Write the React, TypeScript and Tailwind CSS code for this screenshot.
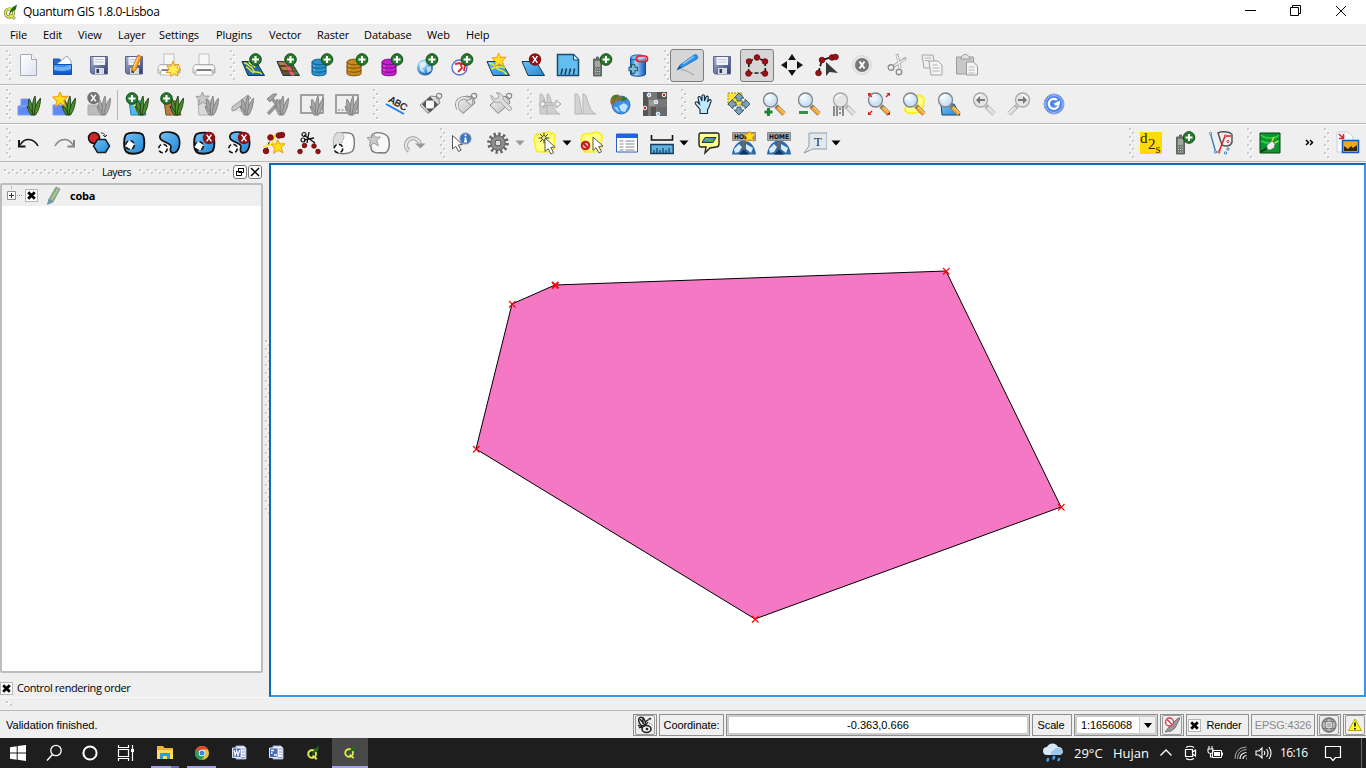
import React from "react";

type Kids = { children?: React.ReactNode };

function Svg({ children, w = 24, h = 24, vb }: Kids & { w?: number; h?: number; vb?: string }) {
  return (
    <svg width={w} height={h} viewBox={vb ?? `0 0 ${w} ${h}`} fill="none" className="block shrink-0">
      {children}
    </svg>
  );
}

function Defs() {
  return (
    <svg width="0" height="0" className="absolute">
      <defs>
        <linearGradient id="blue" x1="0" y1="0" x2="1" y2="1"><stop offset="0" stopColor="#6fc3f7" /><stop offset="1" stopColor="#2186d8" /></linearGradient>
        <linearGradient id="paper" x1="0" y1="0" x2="1" y2="1"><stop offset="0" stopColor="#fff" /><stop offset="1" stopColor="#dfe3f0" /></linearGradient>
        <linearGradient id="disk" x1="0" y1="0" x2="1" y2="1"><stop offset="0" stopColor="#a9b3cf" /><stop offset="0.5" stopColor="#6f7ba6" /><stop offset="1" stopColor="#2c3866" /></linearGradient>
        <linearGradient id="folder" x1="0" y1="0" x2="0" y2="1"><stop offset="0" stopColor="#3f9bf0" /><stop offset="1" stopColor="#0a4fbe" /></linearGradient>
        <linearGradient id="gray" x1="0" y1="0" x2="1" y2="1"><stop offset="0" stopColor="#f4f4f4" /><stop offset="1" stopColor="#bdbdbd" /></linearGradient>
        <linearGradient id="tank" x1="0" y1="0" x2="1" y2="0"><stop offset="0" stopColor="#1b63c0" /><stop offset="0.35" stopColor="#a5d6fb" /><stop offset="1" stopColor="#0f55b5" /></linearGradient>
        <radialGradient id="lens" cx="0.4" cy="0.35" r="0.7"><stop offset="0" stopColor="#f4faff" /><stop offset="1" stopColor="#bcd6f0" /></radialGradient>
        <radialGradient id="globe" cx="0.35" cy="0.3" r="0.8"><stop offset="0" stopColor="#e6f5ff" /><stop offset="0.5" stopColor="#5aa9e6" /><stop offset="1" stopColor="#164f94" /></radialGradient>
        <pattern id="gripV" width="6" height="8" patternUnits="userSpaceOnUse">
          <path d="M1 1h2v2h-2zM4 5h2v2h-2z" fill="#fff" /><path d="M0 0h2v2h-2zM3 4h2v2h-2z" fill="#c9c9c9" />
        </pattern>
        <pattern id="gripH" width="8" height="6" patternUnits="userSpaceOnUse">
          <path d="M1 1h2v2h-2zM5 4h2v2h-2z" fill="#fff" /><path d="M0 0h2v2h-2zM4 3h2v2h-2z" fill="#c9c9c9" />
        </pattern>
      </defs>
    </svg>
  );
}

/* ---------- shared glyph parts ---------- */
const Plus = ({ x = 16, y = 6.5 }: { x?: number; y?: number }) => (
  <g>
    <circle cx={x} cy={y} r="5.8" fill="#267a2b" stroke="#0f4a17" strokeWidth="1" />
    <path d={`M${x - 3.5} ${y}h7M${x} ${y - 3.5}v7`} stroke="#fff" strokeWidth="2.1" />
  </g>
);
const Cross = ({ x = 16, y = 7, c = "#8c1014" }: { x?: number; y?: number; c?: string }) => (
  <g>
    <circle cx={x} cy={y} r="6.2" fill={c} />
    <path d={`M${x - 2.4} ${y - 3.4}l4.8 6.8M${x + 2.4} ${y - 3.4}l-4.8 6.8`} stroke="#fff" strokeWidth="1.5" />
  </g>
);
const Star = ({ x = 0, y = 0, s = 1, gray = false }: { x?: number; y?: number; s?: number; gray?: boolean }) => (
  <path
    transform={`translate(${x} ${y}) scale(${s})`}
    d="M6.6 0L8.7 4.4L14 4.2L10.3 8.2L12 13.4L7.2 10.8L2.6 13.8L3.6 8.6L0 4.8L5 4.4Z"
    fill={gray ? "#c9c9c9" : "#ffe01c"}
    stroke={gray ? "#9a9a9a" : "#f39a10"}
    strokeWidth="1"
  />
);
const Grass = ({ gray = false }: { gray?: boolean }) => (
  <g stroke={gray ? "#808080" : "#1f3f16"} fill={gray ? "#a8a8a8" : "#4c8f2c"} strokeWidth="0.9">
    <path d="M16 23C12 19 10.500 13 12 7C15 11 16.500 17 16.500 23Z" />
    <path d="M16 23C14.500 16 15.500 9 18 4C19.500 11 18.500 18 17.500 23Z" />
    <path d="M17 23C17.500 16 20 10 23.500 6C23.500 13 21.500 19 18.500 23Z" />
    <path d="M14 23C12.500 20 11 18 10 14C13 16 15 19 16 23Z" />
  </g>
);
const Sheet = ({ kind = "blue" }: { kind?: "blue" | "vector" | "raster" }) => (
  <g>
    <path d="M1 8.500H15L23.500 22.500H7Z" fill={kind === "raster" ? "#63512b" : kind === "vector" ? "#1c6aa8" : "url(#blue)"} stroke="#17384b" strokeWidth="1" />
    {kind === "vector" && <path d="M3 10c4 0 4 3 7 4s1 5 5 5 4 1 6 2M8 8.500c0 4 5 2 6 6M5 14c3 0 4 5 8 6" stroke="#e5ed28" strokeWidth="1.400" />}
    {kind === "raster" && <g><path d="M7 8.500h4l8 14h-4Z" fill="#df6079" /><path d="M2 9h5l2 3H4zM5 14h5l2 3H7z" fill="#b9813d" /><path d="M13 9h2l3 5h-3zM17 16h2l3 5h-3z" fill="#478f3a" /><path d="M3 13h14M6 18h15" stroke="#522f26" strokeWidth="0.9" /></g>}
  </g>
);
const Db = ({ c, d }: { c: string; d: string }) => (
  <g>
    <path d="M1 9v11.500c0 3 14 3 14 0V9Z" fill={c} stroke={d} />
    <ellipse cx="8" cy="9" rx="7" ry="2.800" fill={c} stroke={d} />
    <path d="M1 13c0 3 14 3 14 0M1 17c0 3 14 3 14 0" stroke={d} strokeWidth="1.100" />
    <path d="M3 12.500v1.500M3 16.500v2" stroke="#fff" strokeOpacity="0.5" />
  </g>
);
const Floppy = () => (
  <g>
    <path d="M3.500 3.500h17v17.500h-15.500l-1.500-1.500Z" fill="url(#disk)" stroke="#5b668f" />
    <path d="M6.500 4h11.500v8h-11.500z" fill="#f3f4f7" /><path d="M8 6.500h8.500M8 9h8.500" stroke="#c3c7d4" />
    <path d="M8 15h9v6H8z" fill="#d8dbe4" /><path d="M9.500 16h2.500v4H9.500z" fill="#2c3866" />
  </g>
);
const Printer = () => (
  <g>
    <path d="M7 1h10v11H7z" fill="#f7f7f7" stroke="#b5b5b5" strokeWidth="0.8" />
    <path d="M3 11.500h18l2 3v5.500H1v-5.500Z" fill="url(#gray)" stroke="#a2a2a2" strokeWidth="0.8" />
    <path d="M2 13h20v3H2z" fill="#fafafa" /><path d="M4.500 17.500h15l1.500 4.500H3z" fill="#fff" stroke="#aaa" strokeWidth="0.8" />
    <path d="M5 17h14" stroke="#555" strokeWidth="1.200" />
  </g>
);
const Dots = ({ pts, r = 2.6 }: { pts: number[][]; r?: number }) => (
  <g>{pts.map(([x, y]) => <circle key={`${x}-${y}`} cx={x} cy={y} r={r} fill="#9d1015" stroke="#5f0508" strokeWidth="0.8" />)}</g>
);
const Lens = ({ gray = false, flip = false }: { gray?: boolean; flip?: boolean }) => (
  <g transform={flip ? "translate(24 0) scale(-1 1)" : undefined}>
    <path d="M14 14L22 22" stroke={gray ? "#b0b0b0" : "#8c7a5c"} strokeWidth="4.600" />
    <path d="M15.500 15.500L22 22" stroke={gray ? "#dedede" : "#f9a62a"} strokeWidth="3.200" />
    <path d="M16.500 15L22.500 21" stroke={gray ? "#eee" : "#ffe0a0"} strokeWidth="1" />
    <circle cx="8.500" cy="8" r="7" fill={gray ? "#e6e6e6" : "url(#lens)"} stroke={gray ? "#a9a9a9" : "#7d8389"} strokeWidth="1.300" />
    <path d="M4 7a5 5 0 0 1 5-4" stroke="#fff" strokeWidth="1.300" />
  </g>
);
const Arrow = ({ x = 0, y = 0 }: { x?: number; y?: number }) => (
  <path transform={`translate(${x} ${y})`} d="M0 0L0 13.500L3.200 10.700L6 16L8.500 14.700L5.800 9.500L10 9Z" fill="#fff" stroke="#555" strokeWidth="1" />
);
const BLOB = "M4 3.500C7 1 18 1 20.500 3.500C23 7 23 18 20 20.500C16 23.500 7 23.500 4 20.500C1.500 17 1.500 7 4 3.500Z";
const PART = "M5 2C10 0 19 1 21.500 6C24 12 22 20 18 21.500C14 23 12.500 20 14 16C14.500 13 10 12 6 10C2 8 2 4 5 2Z";
const HoleRing = ({ x = 7, y = 15 }: { x?: number; y?: number }) => <circle cx={x} cy={y} r="4.300" fill="#fff" stroke="#111" strokeWidth="1.600" strokeDasharray="4.300 2.450" />;
const Gps = () => (
  <g>
    <path d="M2.500 6h3V4h2v2h3v17H2.500z" fill="#6e776f" stroke="#4a514b" strokeWidth="0.8" />
    <path d="M4 8h5v6H4z" fill="#9fab9f" /><path d="M4 16h5M4 18.500h5M4 21h5" stroke="#c7cec7" strokeWidth="1" strokeDasharray="1.200 0.8" />
  </g>
);
const GlobeG = ({ x = 9, y = 14, r = 8 }: { x?: number; y?: number; r?: number }) => (
  <g><circle cx={x} cy={y} r={r} fill="url(#globe)" /><path d={`M${x - r * 0.7} ${y - r * 0.5}l${r * 0.7} ${-r * 0.3}l${r * 0.2} ${r * 0.5}l${-r * 0.5} ${r * 0.4}l${r * 0.3} ${r * 0.6}l${-r * 0.6} ${-r * 0.3}zM${x + r * 0.2} ${y}l${r * 0.5} ${-r * 0.2}l${r * 0.1} ${r * 0.6}l${-r * 0.5} ${r * 0.3}z`} fill="#e6f3fb" opacity="0.75" /></g>
);
const Tag = () => <g><path d="M1 13L12 4L19 5L21 11L9 21.500Z" fill="url(#gray)" stroke="#858585" strokeWidth="1" /><circle cx="20" cy="4" r="2.700" stroke="#888" strokeWidth="1.200" /></g>;
const Halo = () => <path d="M2 5C5 1 11 4 14 1.500C18 1 23 3 22 7C20 11 23 15 21 18C17 23 11 20 7 21C1 21 3 15 2 12C1 9 1 7 2 5Z" fill="#ffff8a" stroke="#fbf01c" strokeWidth="1.800" />;

/* ---------- toolbar icons ---------- */
const I: Record<string, React.ReactNode> = {
  newFile: <g><path d="M3.500 1.500h11l5 5v16h-16z" fill="url(#paper)" stroke="#a4a9b8" /><path d="M14.500 1.500v5h5" fill="#fff" stroke="#a4a9b8" /></g>,
  open: <g><path d="M1.500 6h6l2 2h9v13h-17z" fill="#2a66c4" stroke="#1b4fa5" /><path d="M5 11l10-8 4 5v4H5z" fill="#fff" stroke="#7b8db8" strokeWidth="0.8" /><path d="M1.500 11.500h18v10h-18z" fill="url(#folder)" stroke="#1352b2" /><path d="M2 13c6 2 12 1 17-1v4c-6 3-12 2-17 1z" fill="#8cc4fa" fillOpacity=".7" /></g>,
  save: <Floppy />,
  saveAs: <g><Floppy /><path d="M16 2l3.500 1.500-6 14-3.500 2v-4z" fill="#ffa51f" stroke="#b46a15" strokeWidth="0.8" /><path d="M16 4l-4.500 11" stroke="#ffe0a0" /><path d="M10 17.500v2l1.800-1z" fill="#333" /></g>,
  printNew: <g><Printer /><path d="M16 8l1.500 5 4.500-2-2 4 4 2-4 1.500 1 4.500-4-2.500-3 3-.5-4-4.500 0 3-3-2-4 4 1z" fill="#ffee54" stroke="#f39a10" /></g>,
  print: <Printer />,
  addVector: <g><Sheet kind="vector" /><Plus x={14.5} /></g>,
  addRaster: <g><Sheet kind="raster" /><Plus x={14.5} /></g>,
  addPg: <g><Db c="#2a93cf" d="#155f8d" /><Plus /></g>,
  addSl: <g><Db c="#c98a1c" d="#7d5208" /><Plus /></g>,
  addMs: <g><Db c="#c61fd0" d="#7a0d82" /><Plus /></g>,
  addWms: <g><GlobeG y={14.5} /><Plus /></g>,
  addWfs: <g><circle cx="8.500" cy="14.500" r="7.500" fill="#fff" stroke="#5a6fd0" strokeWidth="1.400" /><path d="M4 11l5-1 2 5-4 4M9 10l5 2-1 6" stroke="#e0242b" strokeWidth="1.800" /><Plus /></g>,
  newShape: <g><Sheet kind="blue" /><path d="M3 10c6 0 6 6 11 7s4 3 7 4M5 16c5-3 9-3 14-1" stroke="#e5ed28" strokeWidth="1.500" /><Star x={6} y={0} s={1} /></g>,
  remove: <g><Sheet kind="blue" /><Cross x={14} y={6.5} /></g>,
  hatch: <g><path d="M1.500 1.500h16l5 5v16h-21z" fill="#62bdf0" stroke="#194a69" strokeWidth="1.500" /><path d="M17.500 2v5h5" fill="#d3effc" stroke="#194a69" /><path d="M5 21.500l1.500-6M9 21.500l1.500-6M13 21.500l1.500-6M17.500 21.500l1-6" stroke="#153e58" strokeWidth="1.500" /></g>,
  gps: <g><Gps /><Plus x={15} y={6.5} /></g>,
  oracle: <g><path d="M4.500 5v16c0 3 15 3 15 0V5Z" fill="url(#tank)" stroke="#134f96" /><ellipse cx="12" cy="4.500" rx="7.500" ry="2.600" fill="#73bbf5" stroke="#1f62ae" /><rect x="10.500" y="3" width="11" height="5.500" rx="2.700" fill="#ffffff" fillOpacity=".35" stroke="#f0171c" strokeWidth="1.700" /><path d="M2.500 16h9.500M7.250 11.250v9.500" stroke="#23556d" strokeWidth="4.500" /><path d="M3.500 16h7.500M7.250 12.250v7.500" stroke="#79bed4" strokeWidth="2.500" /></g>,
  pen: <g><path d="M2 17l3-5L19 2c3-1.500 5 2 3 4L8 14z" fill="#2b91e8" stroke="#1b6db9" strokeWidth="0.7" /><path d="M8 11L19 3.500" stroke="#8fcffb" strokeWidth="1.500" /><path d="M2 17l2.500-4 2.500 1.500z" fill="#174d83" /><path d="M6 17c5-1 9 3 13 5" stroke="#aaa" strokeWidth="1.200" /></g>,
  capture: <g><path d="M3.500 20h17L20 8.500l-8-4-8 4z" stroke="#1b1b1b" strokeWidth="1.600" strokeDasharray="4 2" /><Dots pts={[[12, 4.5], [4, 8.5], [20, 8.5], [3.5, 20.5], [20, 20.5]]} r={2.8} /></g>,
  move: <path d="M12 1l4 6H8zM12 23l4-6H8zM1 12l6-4v8zM23 12l-6-4v8z" fill="#111" />,
  node: <g><path d="M3 21l4-14 13-4" stroke="#1b1b1b" strokeWidth="1.800" strokeDasharray="6 2" /><Dots pts={[[3.5, 20], [7, 7], [17, 4.5], [20.5, 4]]} r={2.8} /><path d="M11 9v14l3.500-4 8.500 1z" fill="#3a3a3a" /></g>,
  del: <g><circle cx="12" cy="12" r="9.500" fill="#e8e8e8" stroke="#d8d8d8" /><circle cx="12" cy="12" r="7" fill="#777" /><path d="M9.500 8.500l5 7M14.500 8.500l-5 7" stroke="#fff" strokeWidth="2" /></g>,
  cut: <g stroke="#8f8f8f" strokeWidth="1.400"><path d="M12 1l3 14M21 5L9 13" stroke="#a8a8a8" strokeWidth="3" /><path d="M12 2l3 13M20 6L9 13" stroke="#f1f1f1" strokeWidth="1.400" /><circle cx="6" cy="14.500" r="2.800" /><circle cx="14" cy="19" r="2.800" /></g>,
  copy: <g stroke="#a5a5a5"><path d="M2 2h11l2 13H4z" fill="#eee" /><path d="M9 8h9l4 4v10H11z" fill="#f4f4f4" /><path d="M5 5h6M5 7.500h4M12.500 12h5M12.500 15h7M12.500 18h7" stroke="#b4b4b4" /></g>,
  paste: <g stroke="#9b9b9b"><path d="M1.500 4h17v17h-17z" fill="#c8c8c8" /><path d="M6 6c0-6 8-6 9 0z" fill="#e2e2e2" /><path d="M11.500 9h7l4 4v9h-11z" fill="#f5f5f5" /><path d="M13.500 14h6M13.500 17h6M13.500 20h6" stroke="#b8b8b8" /></g>,
  grassOpen: <g><path d="M4 7h9v6h3v10H1v-9h3z" fill="#6189f2" stroke="#7b9df8" /><path d="M2 14h12" stroke="#86a5f7" strokeWidth="1.500" /><Grass /></g>,
  grassNew: <g><path d="M1 13h14v10H1z" fill="#6189f2" stroke="#7b9df8" /><Grass /><Star x={1} y={0} s={1.05} /></g>,
  grassClose: <g><path d="M1 13h14v10H1z" fill="#bcbcbc" stroke="#adadad" /><Grass gray /><Cross x={6.5} y={6} c="#747474" /></g>,
  grassVec: <g><path d="M4 9h12l5 14H6z" fill="#52b8f0" stroke="#2e82b5" /><path d="M8 10c0 5 4 4 5 12" stroke="#e5ed28" strokeWidth="1.400" /><Grass /><Plus x={7} y={6.5} /></g>,
  grassRas: <g><path d="M4 9h12l5 14H6z" fill="#b9813d" stroke="#6f4822" /><path d="M9 12h4l3 11h-5z" fill="#df6079" /><Grass /><Plus x={6.5} y={6.5} /></g>,
  grassMapset: <g><path d="M3 8h12l2 15H4z" fill="#d9d9d9" stroke="#b0b0b0" /><Star x={1} y={0} s={0.95} gray /><Grass gray /></g>,
  grassEdit: <g><path d="M2 15L18 3l3 3L6 18l-4 1z" fill="#c6c6c6" stroke="#999" /><path d="M7 19l14 3V10z" fill="#dadada" /><Grass gray /></g>,
  grassTools: <g><path d="M3 22L16 8M6 5l12 16" stroke="#979797" strokeWidth="3.500" /><path d="M2 7l6-5h4L5 10z" fill="#a4a4a4" stroke="#888" /><Grass gray /></g>,
  grassRegion: <g><path d="M1 3h22v18H1z" stroke="#888" strokeWidth="1.500" /><Grass gray /></g>,
  grassRegionEdit: <g><path d="M1 3h22v18H1z" stroke="#888" strokeWidth="1.500" /><path d="M3 18h12" stroke="#777" strokeDasharray="2 1.500" /><Grass gray /></g>,
  abc: <g><path d="M2 12L20 22" stroke="#1684f0" strokeWidth="2" /><text x="4" y="9.500" transform="rotate(29 4 9.500)" fontFamily="Liberation Sans, sans-serif" fontSize="9.500" stroke="#111" strokeWidth=".3" fill="#111">ABC</text></g>,
  tagMove: <g><Tag /><circle cx="11" cy="12.500" r="4" fill="#fff" /><path d="M11 4.500l4 4H7zM11 20.500l4-4H7zM3 12.500l4-4v8zM19 12.500l-4-4v8z" fill="#555" /></g>,
  tagRot: <g><Tag /><path d="M4 17C0 8 9 3 16 8" stroke="#999" strokeWidth="3.500" /><path d="M4 17C0 8 9 3 16 8" stroke="#eee" strokeWidth="1.800" /><path d="M19 6l-1 8-6-5z" fill="#e6e6e6" stroke="#999" /></g>,
  tagEdit: <g><Tag /><path d="M2 3l4 4 3-1 1-3-3-2c4-1 8 2 7 6l8 8c2 2-1 5-3 3l-8-8C6 12 2 8 2 3Z" fill="#dcdcdc" stroke="#a5a5a5" /></g>,
  histFull: <g fill="#cfcfcf" stroke="#b8b8b8"><path d="M2 22V2c4-2 6 10 7 20zM9 22V2c4-2 4 17 13 20z" /><path d="M1 12l5-4v3h12V8l5 4-5 4v-3H6v3z" fill="#eee" stroke="#a2a2a2" /></g>,
  histCut: <g fill="#d3d3d3" stroke="#b5b5b5"><path d="M2 22V2c5-2 5 10 7 20zM10 22V2c5-2 4 17 13 20z" /></g>,
  earth: <g><circle cx="13" cy="13" r="9" fill="#3b8fe6" stroke="#2461ae" strokeWidth=".8" /><path d="M11 14l5-3 4 3-3 6-4-1z" fill="#bfe6ff" /><path d="M6 15l3 4 3 1-3-5z" fill="#9fd4fb" /><path d="M3 6c4-5 9-4 10 0 2 2-2 4-4 3s-1 4-4 4-3-4-2-7z" fill="#8a6d2c" /><path d="M4 5c3-3 5-2 6 0l-4 3z" fill="#4c7c30" /><path d="M14 4l5 2-2 3-4 0z" fill="#39782c" /></g>,
  raster: <g><path d="M0 0h24v24H0z" fill="#777" /><path d="M0 0h5v24H0zM14 0h10v7H14zM8 15h5v9H8z" fill="#555" /><path d="M6 8h6v6H6z" fill="#999" /><path d="M14 15h10v9H14z" fill="#6a6a6a" />{[[6, 3, "#90b7ec"], [13, 10, "#a8c2ed"], [15, 22, "#90b7ec"], [21, 3, "#d2151b"], [2, 16, "#d2151b"]].map(([x, y, c]) => <circle key={`${x}`} cx={x} cy={y} r="1.800" fill={`${c}`} stroke="#fff" />)}</g>,
  pan: <path d="M8 21.500v-4L3.500 12c-1-2 1-3 2.500-1.500l1.500 1.500L6 6c0-2 2-2 2.500-.5L10 9V4c0-1.700 2.500-1.700 2.500 0v5l1.500-4c1-1.500 2.700-.8 2.300.8L15.500 10l1.500-2c1.200-1 2.500 0 2 1.500L17 15l-1.500 3v3.500z" fill="#bfe8ff" stroke="#162b3a" strokeWidth="1.100" />,
  panSel: <g><path d="M1 1h14v12H1z" fill="#ffe32e" stroke="#a58c20" strokeDasharray="2 1" /><path d="M12 1l5 5h-3v3h-4V6H7zM12 23l5-5h-3v-3h-4v3H7zM1 12l5-5v3h3v4H6v3zM23 12l-5-5v3h-3v4h3v3z" fill="#7ca2bd" stroke="#34566e" strokeWidth="0.9" /></g>,
  zoomIn: <g><Lens /><path d="M2.500 20h8M6.500 16v8" stroke="#1e8732" strokeWidth="3" /></g>,
  zoomOut: <g><Lens /><path d="M2 20.500h9" stroke="#2f9447" strokeWidth="3" /></g>,
  zoomNative: <g><Lens gray /><path d="M2 14v10M5 14v10M11 14v10M8 16v2M8 20v2" stroke="#8b8b8b" strokeWidth="2" /></g>,
  zoomFull: <g><Lens /><path d="M1 1h3.500L1 4.500zM23 1h-3.500L23 4.500zM1 23h3.500L1 19.500zM23 23h-3.500l3.500-3.500z" fill="#d71e22" /><path d="M1.500 1.500l3.500 3.500M22.500 1.500l-3.500 3.500M1.500 22.500l3.500-3.500" stroke="#d71e22" strokeWidth="1.400" /></g>,
  zoomSel: <g><path d="M8 5c6-3 13-2 14 2 0 4-1 10-4 13-6 2-15 2-15-3z" fill="#ffff8a" stroke="#f8ef1c" strokeWidth="1.800" /><Lens /></g>,
  zoomLayer: <g><path d="M4 12h13l6 11H5z" fill="url(#blue)" stroke="#174566" /><Lens /></g>,
  zoomLast: <g><Lens gray /><path d="M4 8l4-4v3h5v2H8v3z" fill="#777" /></g>,
  zoomNext: <g><Lens gray flip /><path d="M20 8l-4-4v3h-5v2h5v3z" fill="#777" /></g>,
  refresh: <g><circle cx="12" cy="12" r="10" fill="#4e83ed" stroke="#8ca3d8" /><circle cx="12" cy="12" r="8.500" stroke="#b4cdfb" strokeWidth="0.8" /><path d="M15 8a5 5 0 1 0 1.500 5.500" stroke="#fff" strokeWidth="2.200" /><path d="M11 12h7v-3.500z" fill="#fff" /><path d="M12.500 12.500h5" stroke="#fff" strokeWidth="1.800" /></g>,
  undo: <g><path d="M3 14C7 7 16 6 21 15" stroke="#151515" strokeWidth="1.500" /><path d="M2 9v6.500h6.500" stroke="#151515" strokeWidth="2" /></g>,
  redo: <g><path d="M21 14C17 7 8 6 3 15" stroke="#858585" strokeWidth="1.500" /><path d="M22 9v6.500h-6.500" stroke="#858585" strokeWidth="2" /></g>,
  simplify: <g><circle cx="7" cy="7" r="5.500" fill="#d5262b" stroke="#111" strokeWidth="1.500" /><path d="M10.500 8.500h8l4 6.500-4 6.500h-8l-4-6.500z" fill="url(#blue)" stroke="#13212b" strokeWidth="1.500" /><path d="M14 2c4 0 4 2 4 4m-2-2l2 2 2-2" stroke="#333" /></g>,
  addRing: <g><path d={BLOB} fill="url(#blue)" stroke="#101010" strokeWidth="1.900" /><HoleRing x={8} y={14} /></g>,
  addPart: <g><path d={PART} fill="url(#blue)" stroke="#101010" strokeWidth="1.700" /><HoleRing x={6} y={17.5} /></g>,
  delRing: <g><path d={BLOB} fill="url(#blue)" stroke="#101010" strokeWidth="1.900" /><HoleRing /><Cross x={17} y={7} /></g>,
  delPart: <g><path d={PART} fill="url(#blue)" stroke="#101010" strokeWidth="1.700" /><HoleRing x={6} y={17.5} /><Cross x={17} y={7} /></g>,
  reshape: <g><path d="M4 20L9 6l12-3" stroke="#111" strokeDasharray="4 2" /><path d="M1 16l9-3 4-11" stroke="#ffe600" strokeWidth="1.500" /><Dots pts={[[4, 20], [8.5, 6.5], [20, 4], [17, 4.5]]} r={2.800} /><Star x={9} y={8.500} s={1} /></g>,
  split: <g><path d="M7 4l11 8M12 1L10 12M7 9l10-2" stroke="#111" strokeWidth="1.300" /><circle cx="7" cy="3.500" r="2" stroke="#111" strokeWidth="1.200" /><circle cx="6" cy="9" r="2" stroke="#111" strokeWidth="1.200" /><path d="M3 21l5-7M21 21l-4-7" stroke="#111" strokeDasharray="3 2" /><Dots pts={[[3, 20.5], [7.5, 14.5], [17, 15], [21, 20.5]]} r={2.3} /></g>,
  merge: <g><path d={BLOB} fill="#fafafa" stroke="#777" strokeWidth="1.400" /><path d="M4 2c4-2 8 0 8 4l-3 8-7 2-1-8z" fill="#dcdcdc" stroke="#aaa" strokeDasharray="2 1" /><HoleRing x={6.5} y={17.5} /></g>,
  mergeSel: <g><path d="M5 4C8 0 22 1 22 10C23 16 21 22 17 22C13 21 10 23 7 21C3 21 3 9 5 4Z" fill="#f8f8f8" stroke="#777" strokeWidth="1.400" /><Star x={0} y={2} s={0.95} gray /></g>,
  rotate: <g><path d="M7 20a7 7 0 1 1 11-6" stroke="#a5a5a5" strokeWidth="4" /><path d="M7 20a7 7 0 1 1 11-6" stroke="#e6e6e6" strokeWidth="2" /><path d="M13 12.500h10.500l-5 5z" fill="#999" /></g>,
  identify: <g><circle cx="16.500" cy="7.500" r="5.600" fill="#3f76bd" stroke="#7b9bcb" strokeWidth=".8" /><path d="M16.500 6.500v4M15 10.500h3M16.500 3.500v1.700" stroke="#fff" strokeWidth="1.800" /><Arrow x={3.5} y={4.500} /></g>,
  gear: <g><circle cx="12" cy="12" r="8.800" stroke="#686868" strokeWidth="4" strokeDasharray="2.300 2.307" /><circle cx="12" cy="12" r="7.300" fill="#8e8e8e" stroke="#5c5c5c" /><circle cx="12" cy="12" r="3" fill="#ddd" stroke="#555" /></g>,
  select: <g><Halo /><path d="M11 1.500v11M5.500 7h11M7 3l8 8M15 3l-8 8" stroke="#4a4718" strokeWidth="1" /><circle cx="11" cy="7" r="2.300" fill="#ffff8a" stroke="#444" /><Arrow x={12} y={7} /></g>,
  deselect: <g><Halo /><Arrow x={13} y={6} /><circle cx="5.500" cy="14.500" r="3.800" fill="#fbb" stroke="#c81a1a" strokeWidth="2" /><path d="M3 12l5 5" stroke="#c81a1a" strokeWidth="2" /></g>,
  table: <g><path d="M1.500 3h21v18h-21z" fill="#fff" stroke="#295dbe" /><path d="M1.500 3h21v4h-21z" fill="#1e62e8" /><path d="M4.500 10h4M10.500 10h9M4.500 13h4M10.500 13h9M4.500 16h4M10.500 16h9M4.500 19h4M10.500 19h9" stroke="#777" strokeWidth=".9" /></g>,
  measure: <g><path d="M1.500 4v5h21V4" stroke="#111" strokeWidth="1.600" /><path d="M.8 13.500h22.400v9H.8z" fill="#62afe0" stroke="#163d5b" strokeWidth="1.400" /><path d="M4 23v-4M7 23v-6M10 23v-4M13 23v-6M16 23v-4M19 23v-6" stroke="#113c5e" strokeWidth="1.200" /></g>,
  tip: <g><path d="M4 2h16q2 0 2 2v9q0 3-3 3l-6 1-5 5 1-6H4q-2 0-2-3V4q0-2 2-2z" fill="#fffc91" stroke="#222" strokeWidth="1.400" /><path d="M8 6.500h11l-3 5H5z" fill="#4b8acd" stroke="#22402c" /><path d="M8 8c4 0 4 2 8 2" stroke="#5aba31" strokeWidth="1.800" /></g>,
  bookmark: <g><path d="M0 23.500C1 14 7 9.500 12 9.500S23 14 24 23.500z" fill="#2f6aa9" /><path d="M2 18l5-5 3 3-3 5-4 1zM14 13l7 4-2 5-5-4z" fill="#d9ebf8" /><path d="M7 23.500l5-5 5 5z" fill="#13335d" /><path d="M10.500 9h3v9h-3z" fill="#666" /><path d="M.5 1.500h23v8H.5z" fill="#a7a7a7" stroke="#888" /><text x="2" y="8.200" fontFamily="DejaVu Sans,sans-serif" fontSize="6.500" fontWeight="bold" fill="#111" textLength="20" lengthAdjust="spacingAndGlyphs">HOME</text></g>,
  annotate: <g><path d="M6 2h18v16H10l-9 4 5-7z" fill="#e0e8f0" stroke="#8f9ba4" /><text x="11" y="14.500" fontFamily="Liberation Serif,serif" fontSize="13" fill="#333">T</text></g>,
  d2s: <g><path d="M1 1h22v22H1z" fill="#ffdb00" /><g fontFamily="Liberation Serif,serif" fontSize="15" fill="#222"><text x="1" y="12">d</text><text x="9" y="18">2</text><text x="16.500" y="21.500" fontSize="13">s</text></g></g>,
  topo: <g><path d="M9 2c4-2.500 14-1 14 2v7c-1 4-6 5-10 3z" stroke="#555" strokeWidth="1.500" /><path d="M1.500 2.500l5 18" stroke="#3979b5" strokeWidth="1.300" /><path d="M10 21l6-16h6" stroke="#d7252c" strokeWidth="1.500" /><g fill="#fff" stroke="#d7252c"><circle cx="16.500" cy="5" r="1.100" /><circle cx="19" cy="10.500" r="1.100" /><circle cx="10" cy="21" r="1.100" /></g><g fill="#fff" stroke="#357bb5"><circle cx="1.500" cy="2.500" r="1.200" /><circle cx="6.500" cy="21" r="1.200" /><circle cx="16.500" cy="22" r="1.200" /><circle cx="19" cy="18" r="1.200" /></g></g>,
  plug: <g><path d="M2 2h20v20H2z" fill="#08972d" stroke="#064015" /><path d="M3 4c4 4 15 4 18 0M3 10c6 3 12 3 18 0" stroke="#30d64b" strokeWidth="1.500" /><path d="M3 20c5 0 5-4 9-5" stroke="#073614" strokeWidth="2" /><path d="M9 14l5-4 3 3-1 4-4 2-3-1z" fill="#eee" stroke="#777" strokeWidth=".8" /><path d="M14 10l2-4M17 12l3-2" stroke="#edd62f" strokeWidth="1.500" /></g>,
  overview: <g><path d="M1 1h11l5 5v15H1z" fill="#f8f9fd" stroke="#ccd0da" /><path d="M3 3l4 4M7.500 3v4.500H3" stroke="#db2228" strokeWidth="1.600" /><path d="M6.500 9.500h16v12h-16z" fill="#edaa21" stroke="#1456c8" strokeWidth="1.500" /><path d="M8 20v-5l4 3 3-3 2 2 4-3v6z" fill="#342807" /></g>,
};
I.bookmarkNew = <g>{I.bookmark}<Star x={12} y={-0.5} s={0.82} /></g>;

/* ---------- toolbar building blocks ---------- */
function Btn({ i, on = false }: { i: string; on?: boolean }) {
  return (
    <div className={`mr-px flex h-[33px] w-[34px] shrink-0 items-center justify-center pb-px ${on ? "rounded-[3px] border border-[#7d7d7d] bg-[#d6d6d6]" : ""}`}>
      <Svg>{I[i]}</Svg>
    </div>
  );
}
const Group = ({ names, className = "" }: { names: string[]; className?: string }) => (
  <div className={`flex shrink-0 ${className}`}>{names.map((n) => <Btn key={n} i={n} />)}</div>
);
const Grip = ({ className = "" }: { className?: string }) => (
  <div className={`w-[5px] shrink-0 ${className}`}><Svg w={6} h={31}><rect width="6" height="31" fill="url(#gripV)" /></Svg></div>
);
const Drop = ({ gray = false, className = "" }: { gray?: boolean; className?: string }) => (
  <div className={`w-[12px] shrink-0 ${className}`}><Svg w={12} h={6}><path d="M1.500 0.500h9L6 5.500z" fill={gray ? "#999" : "#000"} /></Svg></div>
);
const Bar = ({ children, className = "h-[39px]" }: Kids & { className?: string }) => (
  <div className={`flex shrink-0 items-center border-b border-t border-b-[#b9b9b9] border-t-[#f9f9f9] pl-[6px] ${className}`}>{children}</div>
);
const Check = () => (
  <div className="flex h-[13px] w-[13px] shrink-0 items-center justify-center border border-[#b5b5b5] bg-white">
    <Svg w={9} h={9}><path d="M1.200 1.200l6.600 6.600M7.800 1.200L1.200 7.800" stroke="#000" strokeWidth="2.800" /></Svg>
  </div>
);
const GripH = ({ className = "" }: { className?: string }) => (
  <div className={`h-[6px] shrink-0 overflow-hidden ${className}`}><Svg w={90} h={6}><rect width="90" height="6" fill="url(#gripH)" /></Svg></div>
);
const Panel = ({ children, className = "" }: Kids & { className?: string }) => (
  <div className={`flex h-[22px] shrink-0 items-center justify-center border border-[#8f8f8f] ${className}`}>{children}</div>
);

const MENU: [string, string][] = [
  ["File", "w-[33px]"], ["Edit", "w-[35px]"], ["View", "w-[40px]"], ["Layer", "w-[41px]"], ["Settings", "w-[57px]"], ["Plugins", "w-[53px]"],
  ["Vector", "w-[48px]"], ["Raster", "w-[47px]"], ["Database", "w-[63px]"], ["Web", "w-[39px]"], ["Help", "w-[40px]"],
];

const VERTS = [[946, 271], [1061, 507], [755, 619], [476, 449], [512, 304], [555, 285]];

function MapCanvas() {
  return (
    <div className="h-[534px] w-[1097px] shrink-0 overflow-hidden border-2 border-b-[#3c95e0] border-l-[#1068b8] border-r-[#3c95e0] border-t-[#1068b8] bg-white">
      <Svg w={1093} h={530} vb="271 165 1093 530">
        <polygon points={VERTS.map((p) => p.join(",")).join(" ")} fill="#f578c4" stroke="#000" strokeWidth="1" />
        {VERTS.map(([x, y], n) => (
          <path key={x} d={`M${x - 3} ${y - 3}l6.500 6.500M${x + 3.5} ${y - 3}l-6.500 6.500`} stroke="#ff0000" strokeWidth={n === 5 ? 1.8 : 1.1} />
        ))}
      </Svg>
    </div>
  );
}

function LayersDock() {
  return (
    <div className="flex w-[264px] shrink-0 flex-col">
      <div className="flex h-[20px] shrink-0 items-center pb-[2px] pl-[4px] pr-[2px]">
        <GripH className="w-[90px]" />
        <span className="w-[45px] text-center text-[10.500px] leading-[14px] tracking-[-0.450px]">Layers</span>
        <GripH className="w-[90px]" />
        <div className="ml-[4px] flex gap-[1px]">
          <div className="flex h-[14px] w-[14px] items-center justify-center rounded-[3px] border border-[#777] bg-white"><Svg w={10} h={10}><path d="M3.500 1.500h5v4h-5zM3 1.500h6M1.500 4.500h5v4h-5zM1 4.500h6" fill="#fff" stroke="#000" /></Svg></div>
          <div className="flex h-[14px] w-[14px] items-center justify-center rounded-[3px] border border-[#777] bg-white"><Svg w={10} h={10}><path d="M1 1l8 8M9 1L1 9" stroke="#000" strokeWidth="1.500" /></Svg></div>
        </div>
      </div>
      <div className="h-[490px] w-[263px] shrink-0 rounded-[2px] border-2 border-[#bdbdbd] bg-white">
        <div className="flex h-[21px] items-center bg-[#efefef] pl-[5px]">
          <div className="-ml-px mr-px"><Svg w={18} h={21}><path d="M5.500 1v4M11 10.500h6" stroke="#999" strokeDasharray="1 1" /><path d="M1.500 6.500h8v8h-8z" fill="#fff" stroke="#8d8d8d" /><path d="M3 10.500h5M5.500 8v5" stroke="#333" /></Svg></div>
          <Check />
          <div className="ml-[7px]"><Svg w={18} h={20}><path d="M4 13L11 1l4 2L8 16l-5 2z" fill="#86a871" stroke="#8aa5a8" /><path d="M6.500 13.500L13 3" stroke="#b5cc94" strokeWidth="1.500" /><path d="M2 19l1.500-6 4.500 3z" fill="#6d93b7" /></Svg></div>
          <span className="ml-[7px] text-[11px] font-bold tracking-[-0.200px]">coba</span>
        </div>
      </div>
      <div className="mt-[7px] flex h-[16px] items-center gap-[4px] text-[11px] tracking-[-0.400px]"><Check />Control rendering order</div>
    </div>
  );
}

function StatusBar() {
  return (
    <div className="flex h-[27px] shrink-0 items-center pt-[1px] font-['Liberation_Sans',Arial,sans-serif] text-[11px]">
      <span className="w-[633px] shrink-0 pl-[6px]">Validation finished.</span>
      <Panel className="w-[24px]"><div className="rounded-[2px] border border-[#999]"><Svg w={18} h={18}><ellipse cx="6" cy="5.500" rx="3" ry="4.500" transform="rotate(-25 6 5.500)" stroke="#222" strokeWidth="1.500" /><path d="M4 3l4 5M7 1v7M2 9c2 2 8 1 10-3M9 6l6-4M3 12c2-2 4 0 6 1" stroke="#222" strokeWidth="1.400" /><ellipse cx="10.500" cy="13" rx="4.500" ry="3.500" fill="#eee" stroke="#222" strokeWidth="1.600" /><circle cx="11" cy="13" r="1.300" fill="#222" /><path d="M12 3l4 1M13 7l4 2" stroke="#777" strokeDasharray="1 1" /></Svg></div></Panel>
      <Panel className="ml-[2px] w-[65px] tracking-[-0.100px]">Coordinate:</Panel>
      <Panel className="ml-[2px] w-[304px]"><div className="flex h-full w-full items-center justify-center rounded-[3px] border-2 border-[#ccc] bg-white">-0.363,0.666</div></Panel>
      <Panel className="ml-[2px] w-[40px] pr-[2px] tracking-[-0.150px]">Scale</Panel>
      <Panel className="ml-[2px] w-[84px]"><div className="flex h-full w-full items-center rounded-[3px] border-2 border-[#ccc] bg-white pl-[4px]"><span className="grow tracking-[-0.100px]">1:1656068</span><div className="flex h-full w-[16px] items-center justify-center border-l border-[#ccc] bg-[#efefef]"><Svg w={8} h={5}><path d="M0 0h8L4 5z" fill="#000" /></Svg></div></div></Panel>
      <Panel className="ml-[2px] w-[24px]"><div className="rounded-[2px] border border-[#999]"><Svg w={18} h={18}><path d="M17 2L12 12l-4 3-6 1 4-5L15 2z" fill="#999" stroke="#777" /><circle cx="6.500" cy="6" r="4" fill="#fff" stroke="#dc4147" strokeWidth="1.500" /><path d="M4 3.500l5 5" stroke="#dc4147" strokeWidth="1.500" /></Svg></div></Panel>
      <Panel className="ml-[2px] w-[63px] gap-[5px] pr-[5px]"><Check /><span className="tracking-[-0.150px]">Render</span></Panel>
      <Panel className="ml-[2px] w-[64px] tracking-[-0.200px] text-[#8a8a8a]">EPSG:4326</Panel>
      <Panel className="ml-[2px] w-[24px]"><div className="rounded-[2px] border border-[#999]"><Svg w={18} h={18}><circle cx="9" cy="9" r="7" fill="#b5b5b5" stroke="#777" strokeWidth="1.400" /><ellipse cx="9" cy="9" rx="3.500" ry="7" stroke="#777" /><path d="M3 5.500h12M3 12.500h12" stroke="#777" /><circle cx="9" cy="9" r="3" stroke="#e6e6e6" /></Svg></div></Panel>
      <Panel className="ml-[2px] w-[24px]"><div className="rounded-[2px] border border-[#999]"><Svg w={18} h={18}><path d="M9 3l6.500 11.500H2.500z" fill="#ffff1c" stroke="#b5a516" /><path d="M9 6.500v4M9 12v1.500" stroke="#111" strokeWidth="1.700" /></Svg></div></Panel>
    </div>
  );
}

const QLogo = () => (
  <g>
    <circle cx="7" cy="9" r="4.400" stroke="#55601c" strokeWidth="3" />
    <path d="M7.500 11l5 4.200" stroke="#55601c" strokeWidth="3" />
    <circle cx="7" cy="9" r="4.400" stroke="#e6ec5a" strokeWidth="2" />
    <path d="M7.500 11l4.800 4" stroke="#e6ec5a" strokeWidth="1.900" />
    <path d="M6 12l1.500-5L10 3l5-3-1.500 5.500L9 8z" fill="#1f6d18" />
  </g>
);
const WordPage = ({ w = true }: { w?: boolean }) => <g><path d="M5 1h8l2 2v11H5z" fill="#f5f7fd" stroke="#9aa9d6" /><path d="M10 4h4M11 7h3M11 10h3M9 12.500h5" stroke="#8495cc" /><path d="M1.500 3h8.500v9.500H1.500z" fill="#4a69bd" stroke="#dfe6f8" />{w ? <path d="M3 5l1 5.500 1.700-5 1.300 5L8.700 5" stroke="#fff" strokeWidth="1.200" /> : <path d="M3 5.500h3M3 8h1.500M6 10h3M11 11h2" stroke="#fff" strokeWidth="1.600" />}</g>;

function Taskbar() {
  return (
    <div className="flex h-[30px] shrink-0 items-center bg-[#1e1e1e] text-white">
      <div className="flex w-[36px] justify-center"><Svg w={16} h={16}><path d="M0 2.300l6.700-1v6.300H0zM7.700 1.100L16 0v7.600H7.700zM0 8.600h6.700v6.200L0 13.800zM7.700 8.600H16V16l-8.300-1.200z" fill="#fff" /></Svg></div>
      <div className="flex w-[36px] justify-center"><Svg w={18} h={18}><circle cx="11" cy="6.500" r="5.200" stroke="#fff" strokeWidth="1.300" /><path d="M7.500 10.500L2 16.500" stroke="#fff" strokeWidth="1.400" /></Svg></div>
      <div className="flex w-[36px] justify-center"><Svg w={16} h={16}><circle cx="8" cy="8" r="6.600" stroke="#fff" strokeWidth="2" /></Svg></div>
      <div className="flex w-[36px] justify-center"><Svg w={18} h={16}><path d="M1.500 0v2.500h10V0M1.500 4.500h10v7h-10zM1.500 16v-2.500h10V16M15.500 0v16" stroke="#fff" strokeWidth="1.200" /><path d="M14 4h3v3h-3z" fill="#fff" /></Svg></div>
      <div className="flex h-full w-[39px] flex-col items-center justify-between pl-[3px]">
        <div className="pt-[7px]"><Svg w={16} h={15}><path d="M0 1h6l1.500 2H16v11H0z" fill="#f1b52d" /><path d="M0 5h16v9H0z" fill="#ffd866" /><path d="M3 14V8h10v6h-3v-3H6v3z" fill="#3399dc" /></Svg></div>
        <div className="flex h-[2px]"><div className="w-[20px] bg-[#a4a1ea]" /><div className="w-[8px] bg-[#706ea3]" /></div>
      </div>
      <div className="flex h-full w-[37px] flex-col items-center justify-between">
        <div className="pt-[8px]"><Svg w={14} h={14}><circle cx="7" cy="7" r="7" fill="#eac13a" /><path d="M7 7L.9 3.500A7 7 0 0 1 13.100 3.500H7z" fill="#df4638" /><path d="M7 7L.9 3.500A7 7 0 0 0 7 14l3-5z" fill="#299d58" /><circle cx="7" cy="7" r="3.300" fill="#fff" /><circle cx="7" cy="7" r="2.500" fill="#3e82e8" /></Svg></div>
        <div className="h-[2px] w-[29px] bg-[#a4a1ea]" />
      </div>
      <div className="flex w-[37px] justify-center"><Svg w={16} h={16}><WordPage /></Svg></div>
      <div className="flex w-[37px] justify-center"><Svg w={16} h={16}><WordPage w={false} /></Svg></div>
      <div className="flex w-[38px] justify-center"><Svg w={14} h={15} vb="0 0 16 17"><QLogo /></Svg></div>
      <div className="flex h-full w-[36px] flex-col items-center justify-between bg-[#484848]"><div className="pt-[7px]"><Svg w={14} h={15} vb="0 0 16 17"><QLogo /></Svg></div><div className="h-[2px] w-full bg-[#a4a1ea]" /></div>
      <div className="grow" />
      <Svg w={22} h={20}><path d="M5 12a4 4 0 0 1 0-8 6 6 0 0 1 11 0 4 4 0 0 1 1 8z" fill="#d5e9f9" /><path d="M9 12a4 4 0 0 1 3-5 5 5 0 0 1 9 2c0 2-2 3-4 3z" fill="#9cc8ec" /><path d="M6 16l-.5 1.500M12 14l-.5 1.500M17 16l-.5 1" stroke="#3ea0ef" strokeWidth="2.600" strokeLinecap="round" /></Svg>
      <span className="ml-[10px] w-[39px] text-[13px]">29°C</span>
      <span className="w-[46px] text-[13px]">Hujan</span>
      <Svg w={14} h={10}><path d="M1.500 7.500L7 2l5.500 5.500" stroke="#fff" strokeWidth="1.300" /></Svg>
      <div className="ml-[11px]"><Svg w={14} h={16}><path d="M1.500 4.500h7v7h-7zM8.500 7l3-2v6l-3-2M2 2.500q4-2.500 8 0M2 13.500q4 2.500 8 0" stroke="#fff" strokeWidth="1.200" /></Svg></div>
      <div className="ml-[9px]"><Svg w={17} h={14}><path d="M5.500 4.500h9v7h-9zM15.500 6.500v3" stroke="#fff" /><path d="M7 6h6v4H7z" fill="#fff" /><path d="M1 3h5v3c-1 2-4 2-5 0zM2 0v3M5 0v3M3.500 7v4h2" stroke="#fff" strokeWidth="1.100" /></Svg></div>
      <div className="ml-[10px]"><Svg w={14} h={14}><path d="M12 12.500h.5" stroke="#fff" strokeWidth="2" /><path d="M9 13q0-3 3.500-3.500M6 13q0-6 6.500-6.500" stroke="#fff" strokeWidth="1.200" /><path d="M3.500 13q0-9 9-9.500M1 13Q1 1.500 12.500 1" stroke="#aaa" /></Svg></div>
      <div className="ml-[7px]"><Svg w={17} h={14}><path d="M1 5h3l3-3v10L4 9H1zM9 5q1.500 2 0 4M11.500 3q3 4 0 8M14 1q4 6 0 12" stroke="#fff" strokeWidth="1.100" /></Svg></div>
      <span className="ml-[8px] w-[28px] text-[12px] tracking-[-0.600px]">16:16</span>
      <div className="ml-[16px]"><Svg w={18} h={18}><path d="M1.500 2.500h15v11h-5l-2.500 3-2.500-3h-5z" stroke="#fff" strokeWidth="1.200" /></Svg></div>
      <div className="ml-[19px] mr-[4px] h-full w-px bg-[#666]" />
    </div>
  );
}

export default function App() {
  return (
    <div className="flex h-[768px] w-[1366px] flex-col overflow-hidden bg-[#efefef] font-['Open_Sans','Noto_Sans',sans-serif] text-[11px] leading-[14px] text-black">
      <Defs />
      <div className="flex h-[24px] shrink-0 items-center bg-white pl-[3px] text-[12px]">
        <Svg w={15} h={17} vb="0 0 16 17"><QLogo /></Svg>
        <span className="ml-[5px] tracking-[-0.370px]">Quantum GIS 1.8.0-Lisboa</span>
        <div className="grow" />
        <div className="mr-[19px] flex items-center gap-[34px] pb-[3px]">
          <Svg w={11} h={11}><path d="M0 5.500h11" stroke="#000" /></Svg>
          <Svg w={11} h={11}><path d="M.5 2.500h8v8h-8zM2.500 2.500v-2h8v8h-2" stroke="#000" /></Svg>
          <Svg w={12} h={12}><path d="M1 1l10 10M11 1L1 11" stroke="#000" /></Svg>
        </div>
      </div>
      <div className="flex h-[22px] shrink-0 items-center border-b border-[#b9b9b9] pl-[10px] tracking-[-0.100px]">
        {MENU.map(([label, w]) => <span key={label} className={`${w} whitespace-nowrap`}>{label}</span>)}
      </div>
      <Bar>
        <Grip />
        <Group className="ml-px" names={["newFile", "open", "save", "saveAs", "printNew", "print"]} />
        <Grip className="ml-[8px]" />
        <Group className="ml-px" names={["addVector", "addRaster", "addPg", "addSl", "addMs", "addWms", "addWfs", "newShape", "remove", "hatch", "gps", "oracle"]} />
        <Grip className="ml-[8px]" />
        <div className="ml-px flex"><Btn i="pen" on /><Btn i="save" /><Btn i="capture" on /></div>
        <Group names={["move", "node", "del", "cut", "copy", "paste"]} />
      </Bar>
      <Bar>
        <Grip />
        <Group className="ml-px" names={["grassOpen", "grassNew", "grassClose"]} />
        <div className="mr-[2px] h-[30px] w-px bg-[#b5b5b5]" />
        <Group names={["grassVec", "grassRas", "grassMapset", "grassEdit", "grassTools", "grassRegion", "grassRegionEdit"]} />
        <Grip className="ml-[8px]" />
        <Group className="ml-px" names={["abc", "tagMove", "tagRot", "tagEdit"]} />
        <Grip className="ml-[8px]" />
        <Group className="ml-px" names={["histFull", "histCut", "earth", "raster"]} />
        <Grip className="ml-[8px]" />
        <Group className="ml-px" names={["pan", "panSel", "zoomIn", "zoomOut", "zoomNative", "zoomFull", "zoomSel", "zoomLayer", "zoomLast", "zoomNext", "refresh"]} />
      </Bar>
      <Bar className="h-[38px]">
        <Grip />
        <Group className="ml-px" names={["undo", "redo", "simplify", "addRing", "addPart", "delRing", "delPart", "reshape", "split", "merge", "mergeSel", "rotate"]} />
        <Grip className="ml-[8px]" />
        <Group className="-ml-px" names={["identify"]} />
        <Group className="ml-[2px]" names={["gear"]} />
        <Drop gray className="-ml-[2px]" />
        <Group className="ml-[2px]" names={["select"]} />
        <Drop className="-ml-[2px]" />
        <Group className="ml-[2px]" names={["deselect", "table", "measure"]} />
        <Drop className="-ml-[2px]" />
        <Group className="ml-[2px]" names={["tip", "bookmarkNew", "bookmark"]} />
        <Group className="ml-px" names={["annotate"]} />
        <Drop className="-ml-[3px]" />
        <div className="grow" />
        <Grip />
        <Group names={["d2s", "gps", "topo"]} />
        <Grip className="ml-[8px]" />
        <Group className="ml-px" names={["plug"]} />
        <div className="ml-[17px] w-[19px]"><Svg w={10} h={8}><path d="M1 1l2.500 2.500L1 6M5 1l2.500 2.500L5 6" stroke="#000" strokeWidth="1.500" /></Svg></div>
        <Grip />
        <Group className="ml-[2px]" names={["overview"]} />
      </Bar>
      <div className="flex h-[535px] shrink-0 pt-px">
        <LayersDock />
        <div className="flex w-[5px] shrink-0 items-center overflow-hidden pb-[6px] pl-px"><Svg w={4} h={174}><rect width="4" height="174" fill="url(#gripV)" /></Svg></div>
        <MapCanvas />
      </div>
      <div className="h-[14px] shrink-0 border-b border-t border-b-[#b9b9b9] border-t-[#fafafa] pl-[6px] pt-[3px]"><GripH className="w-[6px]" /></div>
      <StatusBar />
      <Taskbar />
    </div>
  );
}
